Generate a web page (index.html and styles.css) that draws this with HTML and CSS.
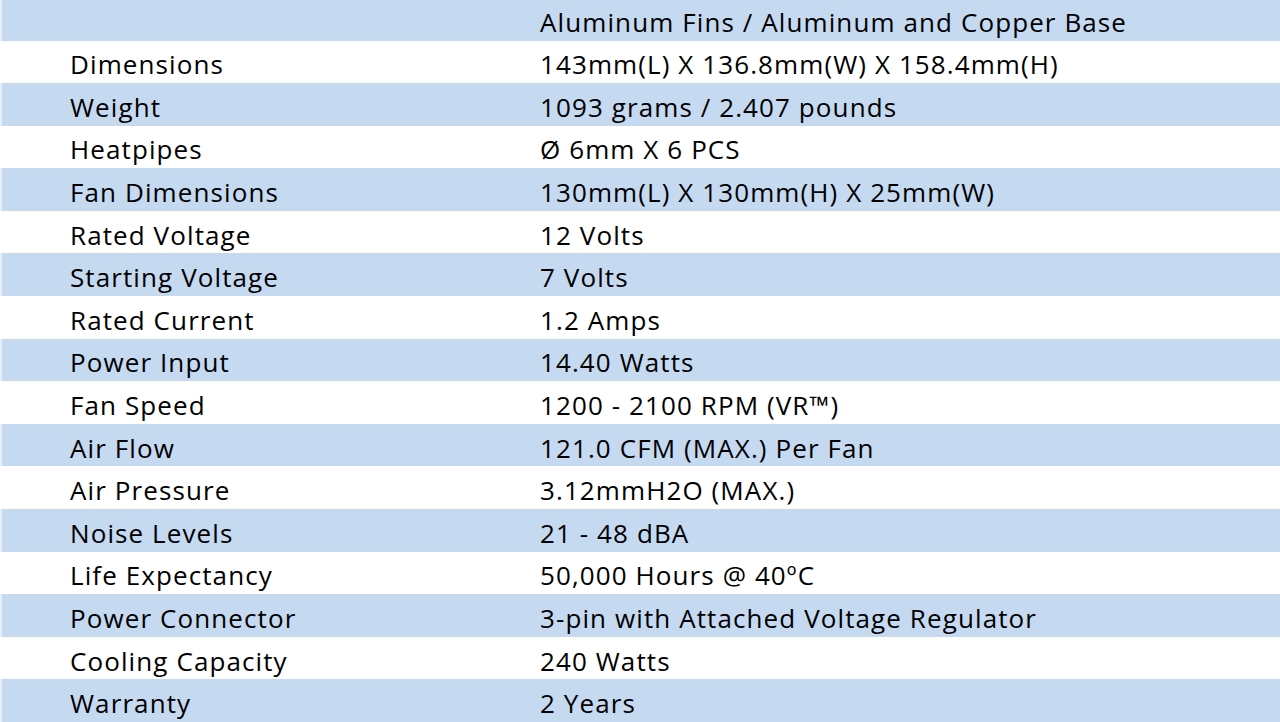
FILE: index.html
```html
<!DOCTYPE html>
<html lang="en">
<head>
<meta charset="utf-8">
<title>Specifications</title>
<link rel="stylesheet" href="styles.css">
</head>
<body>
<div class="specs">
  <div class="row blue"><span class="label"></span><span class="value">Aluminum Fins / Aluminum and Copper Base</span></div>
  <div class="row"><span class="label">Dimensions</span><span class="value">143mm(L) X 136.8mm(W) X 158.4mm(H)</span></div>
  <div class="row blue"><span class="label">Weight</span><span class="value">1093 grams / 2.407 pounds</span></div>
  <div class="row"><span class="label">Heatpipes</span><span class="value">Ø 6mm X 6 PCS</span></div>
  <div class="row blue"><span class="label">Fan Dimensions</span><span class="value">130mm(L) X 130mm(H) X 25mm(W)</span></div>
  <div class="row"><span class="label">Rated Voltage</span><span class="value">12 Volts</span></div>
  <div class="row blue"><span class="label">Starting Voltage</span><span class="value">7 Volts</span></div>
  <div class="row"><span class="label">Rated Current</span><span class="value">1.2 Amps</span></div>
  <div class="row blue"><span class="label">Power Input</span><span class="value">14.40 Watts</span></div>
  <div class="row"><span class="label">Fan Speed</span><span class="value">1200 - 2100 RPM (VR™)</span></div>
  <div class="row blue"><span class="label">Air Flow</span><span class="value">121.0 CFM (MAX.) Per Fan</span></div>
  <div class="row"><span class="label">Air Pressure</span><span class="value">3.12mmH2O (MAX.)</span></div>
  <div class="row blue"><span class="label">Noise Levels</span><span class="value">21 - 48 dBA</span></div>
  <div class="row"><span class="label">Life Expectancy</span><span class="value">50,000 Hours @ 40ºC</span></div>
  <div class="row blue"><span class="label">Power Connector</span><span class="value">3-pin with Attached Voltage Regulator</span></div>
  <div class="row"><span class="label">Cooling Capacity</span><span class="value">240 Watts</span></div>
  <div class="row blue"><span class="label">Warranty</span><span class="value">2 Years</span></div>
</div>
</body>
</html>
```

FILE: styles.css
```css
html, body {
  margin: 0;
  padding: 0;
  background: #ffffff;
  overflow: hidden;
}

.specs {
  margin-top: -2.1px;
  display: flex;
  flex-direction: column;
  font-family: "Open Sans", "Liberation Sans", sans-serif;
  font-size: 26px;
  font-weight: 500;
  letter-spacing: 1.1px;
  color: #000000;
}

.row {
  height: 42.6px;
  display: grid;
  grid-template-columns: 538px 1fr;
  align-items: center;
  border-left: 2px solid rgba(255, 255, 255, 0.55);
  background: #ffffff;
  box-sizing: border-box;
}

.row.blue {
  background: #c5d9f1;
}

.label {
  padding-left: 68px;
  white-space: nowrap;
  padding-top: 5px;
}

.value {
  white-space: nowrap;
  padding-top: 5px;
}
```
